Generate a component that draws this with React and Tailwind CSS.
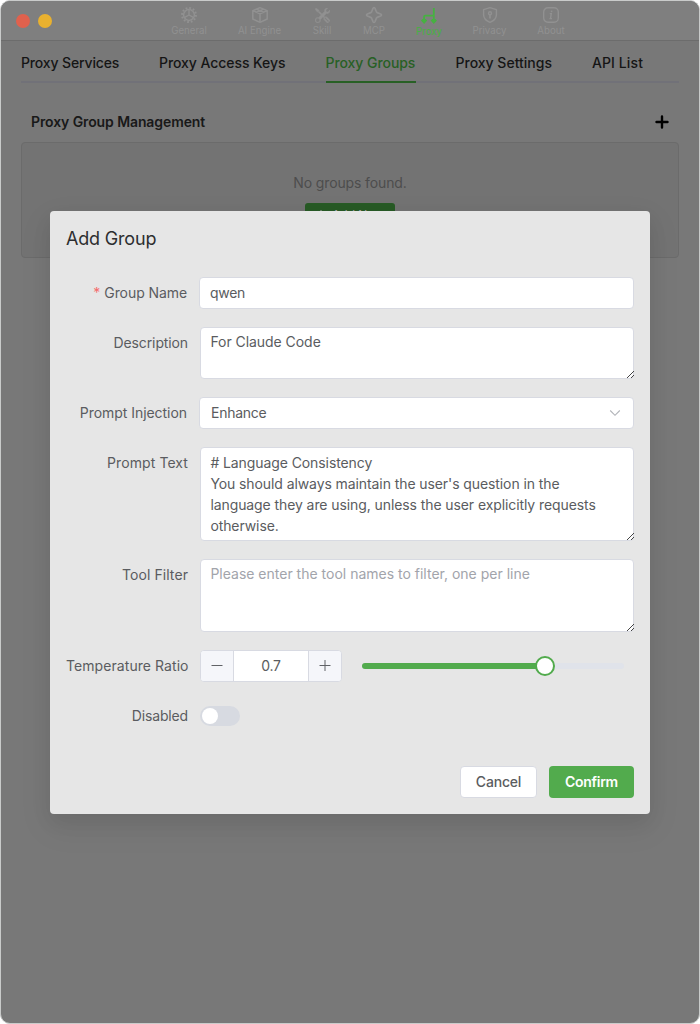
import React from "react";
import { BsTools } from "react-icons/bs";

function GearIcon() {
  return (
    <svg width="18" height="18" viewBox="0 0 18 18" fill="none" stroke="currentColor">
      <circle cx="9" cy="9" r="5.4" strokeWidth="1.5" />
      <circle cx="9" cy="9" r="7" strokeWidth="1.9" strokeDasharray="1.8 1.865" />
      <path d="M9 9V3.6 M9 9 4.3 11.7 M9 9 13.7 11.7" strokeWidth="1.4" />
    </svg>
  );
}

function BoxIcon() {
  return (
    <svg width="18" height="18" viewBox="0 0 18 18" fill="none" stroke="currentColor" strokeWidth="1.5" strokeLinejoin="round">
      <path d="M9 1.6 16.2 4.6V13L9 16.4 1.8 13V4.6Z M1.8 4.6 9 7.8 16.2 4.6 M9 7.8V16.4 M5.4 3.1 12.6 6.2 M12.6 3.1 5.4 6.2" />
    </svg>
  );
}

function StarIcon() {
  return (
    <svg width="18" height="18" viewBox="0 0 18 18" fill="none" stroke="currentColor" strokeWidth="1.7" strokeLinejoin="round">
      <path d="M8 2.4Q9 .8 10 2.4L11.4 5.8 12.2 6.6 15.6 8Q17.2 9 15.6 10L12.2 11.4 11.4 12.2 10 15.6Q9 17.2 8 15.6L6.6 12.2 5.8 11.4 2.4 10Q.8 9 2.4 8L5.8 6.6 6.6 5.8Z" />
    </svg>
  );
}

function ProxyIcon() {
  return (
    <svg width="18" height="18" viewBox="0 0 18 18" fill="none" stroke="currentColor" strokeWidth="1.8">
      <path d="M13.8 1V8.6H5.1Q4.1 8.6 4.1 9.6V13 M13.8 8.6V13" />
      <path d="M.9 13.6 2.6 12H5.6L7.3 13.6 4.1 17Z M10.6 13.6 12.3 12H15.3L17 13.6 13.8 17Z" fill="currentColor" stroke="none" />
    </svg>
  );
}

function ShieldIcon() {
  return (
    <svg width="18" height="18" viewBox="0 0 18 18" fill="none" stroke="currentColor" strokeWidth="1.4" strokeLinejoin="round">
      <path d="M9 1.7 15.4 3.7V8.8Q15.4 13.8 9 16.4 2.6 13.8 2.6 8.8V3.7Z" />
      <circle cx="9" cy="7.2" r="1.5" />
      <path d="M9 8.7V12.6" strokeWidth="1.7" />
    </svg>
  );
}

function InfoIcon() {
  return (
    <svg width="18" height="18" viewBox="0 0 18 18" fill="none" stroke="currentColor" strokeWidth="1.4">
      <rect x="1.7" y="1.7" width="14.6" height="14.6" rx="4.2" />
      <path d="M7.8 7.6H9.3L8.5 12.6 M7.5 12.6H10" />
      <circle cx="9.6" cy="5.3" r=".9" fill="currentColor" stroke="none" />
    </svg>
  );
}

const tools = [
  { name: "General", icon: <GearIcon />, w: "w-[36px]" },
  { name: "AI Engine", icon: <BoxIcon />, w: "w-[43px]" },
  { name: "Skill", icon: <BsTools size={15} stroke="currentColor" strokeWidth=".4" />, w: "w-[20px]" },
  { name: "MCP", icon: <StarIcon />, w: "w-[22px]" },
  { name: "Proxy", icon: <ProxyIcon />, w: "w-[26px]", active: true },
  { name: "Privacy", icon: <ShieldIcon />, w: "w-[33px]" },
  { name: "About", icon: <InfoIcon />, w: "w-[28px]" },
];

const tabs = [
  { name: "Proxy Services", w: "w-[98px] tracking-[-0.14px]" },
  { name: "Proxy Access Keys", w: "w-[126.5px] tracking-[-0.06px]" },
  { name: "Proxy Groups", w: "w-[90px] tracking-[-0.06px]", active: true },
  { name: "Proxy Settings", w: "w-[96.5px]" },
  { name: "API List", w: "w-[53px] tracking-[0.1px]" },
];

function Grip() {
  return (
    <svg className="absolute -right-px -bottom-px" width="8" height="8" viewBox="0 0 8 8" stroke="#444" strokeWidth="1" shapeRendering="crispEdges">
      <path d="M.5 7.5 7.5.5 M4.5 7.5 7.5 4.5" />
    </svg>
  );
}

function Row({ label, required, children, spacing = "pr-3" }) {
  return (
    <div className="mb-[18px] flex">
      <div className={`${spacing} h-8 w-[134px] shrink-0 text-right leading-8 whitespace-nowrap`}>
        {required && <span className="mr-1 text-[#f56c6c]">*</span>}
        {label}
      </div>
      <div className="flex min-w-0 flex-1 items-center">{children}</div>
    </div>
  );
}

const area = "relative w-full rounded border border-[#d8dae2] bg-white px-[9.4px] leading-[21px] whitespace-pre-line";

export default function App() {
  return (
    <div className="h-[1024px] w-[700px] bg-white font-['Inter','Noto_Sans',sans-serif] text-[14px] text-[#5a5c60]">
      <div className="relative h-full overflow-hidden rounded-[10px] border border-[#c9cbca] bg-[#787878]">
        <header className="flex h-10 border-b border-[#6c6c6c] bg-[#7f7f7f]">
          <div className="flex w-[170px] items-center gap-2 pl-[15px]">
            <span className="size-[14px] rounded-full bg-[#e0614d]" />
            <span className="size-[14px] rounded-full bg-[#e9b12f]" />
          </div>
          <nav className="flex gap-[31px] pt-[5px]">
            {tools.map((t) => (
              <div key={t.name} className={`${t.w} ${t.active ? "pt-px text-[#46b141]" : "text-[#919191]"} flex flex-col items-center`}>
                <span className="flex h-[18px] items-center">{t.icon}</span>
                <span className="text-[9.7px] leading-[14px] whitespace-nowrap">{t.name}</span>
              </div>
            ))}
          </nav>
        </header>

        <div className="px-5">
          <div className="flex h-[42px] gap-10 border-b-2 border-[#717178] font-medium text-[#151515]">
            {tabs.map((t) => (
              <div key={t.name} className={`${t.w} ${t.active ? "border-b-2 border-[#286025] text-[#286025]" : ""} h-[42px] leading-[44px] whitespace-nowrap`}>
                {t.name}
              </div>
            ))}
          </div>
          <div className="flex h-[59px] items-center justify-between px-[10px] pt-[18px] font-semibold tracking-[-0.1px] text-[#191919]">
            <span className="-mt-px">Proxy Group Management</span>
            <svg width="14" height="14" viewBox="0 0 14 14" stroke="#000" strokeWidth="2.4" strokeLinecap="round">
              <path d="M7 1.5V12.5 M1.5 7H12.5" />
            </svg>
          </div>
          <div className="flex h-[116px] flex-col items-center rounded border border-[#6b6b6b] bg-[#737373] pt-[29px] text-[#4d4d4d]">
            <span className="leading-[21px] tracking-[-0.13px]">No groups found.</span>
            <div className="mt-[10px] flex h-6 w-[90px] items-center justify-center gap-[6px] rounded-[3px] bg-[#285b26] text-xs text-[#aaa]">
              <svg width="10" height="12" viewBox="0 0 10 12" stroke="currentColor"><path d="M5 1V11 M0 6H10" /></svg>
              <span>Add New</span>
            </div>
          </div>
        </div>

        <section className="absolute top-[210px] left-[49px] h-[603px] w-[600px] rounded bg-[#e6e6e6] px-4 pt-4 shadow-[0_12px_32px_4px_rgba(0,0,0,0.06),0_8px_20px_rgba(0,0,0,0.06)]">
          <h2 className="h-[50px] text-[18px] leading-6 tracking-[-0.18px] text-[#2d2e30]">Add Group</h2>
          <Row label="Group Name" required spacing="pr-[13px] tracking-[-0.08px]">
            <div className="-ml-px h-8 w-[435px] shrink-0 rounded border border-[#d8dae2] bg-white px-[10px] leading-[30px] tracking-[-0.3px]">qwen</div>
          </Row>
          <Row label="Description" spacing="pr-3 tracking-[-0.12px]">
            <div className={`${area} h-[52px] pt-[3px] tracking-[-0.05px]`}>For Claude Code<Grip /></div>
          </Row>
          <Row label="Prompt Injection" spacing="pr-[13px] tracking-[-0.05px]">
            <div className="-ml-px flex h-8 w-[435px] shrink-0 items-center justify-between rounded border border-[#d8dae2] bg-white px-[11px]">
              <span className="leading-[30px] tracking-[-0.25px]">Enhance</span>
              <svg width="14" height="14" viewBox="0 0 14 14" fill="none" stroke="#b2b4b9" strokeWidth="1.1"><path d="M2.2 4.5 7 9.3 11.8 4.5" /></svg>
            </div>
          </Row>
          <Row label="Prompt Text" spacing="pr-3 tracking-[0.08px]">
            <div className={`${area} h-[94px] pt-[4px] tracking-[-0.09px]`}>
              {"# Language Consistency\nYou should always maintain the user's question in the\nlanguage they are using, unless the user explicitly requests\notherwise."}
              <Grip />
            </div>
          </Row>
          <Row label="Tool Filter" spacing="pr-3 tracking-[0.08px]">
            <div className={`${area} h-[73px] pt-[3px] text-[#a2a4ab]`}>Please enter the tool names to filter, one per line<Grip /></div>
          </Row>
          <Row label="Temperature Ratio" spacing="pr-3 tracking-[0.07px]">
            <div className="flex h-8 w-[142px] overflow-hidden rounded border border-[#d8dae2] bg-white">
              <span className="flex w-[33px] items-center justify-center border-r border-[#d8dae2] bg-[#f5f6fa]">
                <svg width="12" height="12" viewBox="0 0 12 12" stroke="#606266"><path d="M.5 5.5H11.5" /></svg>
              </span>
              <span className="flex-1 text-center leading-[30px] tracking-[-0.3px]">0.7</span>
              <span className="flex w-[33px] items-center justify-center border-l border-[#d8dae2] bg-[#f5f6fa]">
                <svg width="12" height="12" viewBox="0 0 12 12" stroke="#606266"><path d="M.5 5.5H11.5 M6 0V11" /></svg>
              </span>
            </div>
            <div className="ml-5 flex h-[6px] w-[262px] items-center rounded-full bg-[#e0e3ea]">
              <div className="h-[6px] w-[183px] rounded-l-full bg-[#52ab4d]" />
              <div className="-ml-[10px] size-5 rounded-full border-2 border-[#52ab4d] bg-white" />
            </div>
          </Row>
          <Row label="Disabled" spacing="pr-3 tracking-[-0.15px]">
            <div className="flex h-5 w-10 items-center rounded-full bg-[#d7dae1] pl-[2px]">
              <span className="size-4 rounded-full bg-white" />
            </div>
          </Row>
          <div className="flex justify-end gap-3 pt-4 font-medium">
            <div className="h-8 w-[77px] rounded border border-[#d8dae2] bg-white text-center leading-[30px] tracking-[-0.2px]">Cancel</div>
            <div className="h-8 w-[85px] rounded bg-[#52ab4d] text-center leading-8 font-semibold tracking-[-0.3px] text-white">Confirm</div>
          </div>
        </section>
      </div>
    </div>
  );
}
